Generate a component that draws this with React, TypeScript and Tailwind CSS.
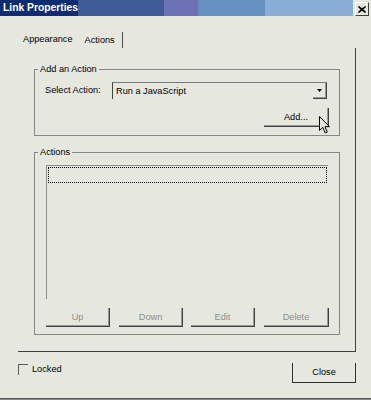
import React from "react";

function Btn({ label, w, disabled, extra = "" }: { label: string; w: string; disabled?: boolean; extra?: string }) {
  return (
    <div
      className={`${w} h-[19px] flex items-center justify-center border-r border-b border-[#404040] shadow-[inset_-1px_-1px_0_#9a9a9a] ${disabled ? "text-[#8e8e8e]" : "text-black"} ${extra}`}
    >
      {label}
    </div>
  );
}

export default function App() {
  return (
    <div className="relative w-[371px] h-[400px] bg-[#e6e7df] flex flex-col overflow-hidden text-black font-['Liberation_Sans',Arial,sans-serif] text-[9.2px] leading-[11px]">
      {/* Title bar */}
      <div className="flex h-[16px] shrink-0">
        <div className="w-[78px] bg-[#0e2c72] text-white font-bold text-[10.3px] leading-[16px] pl-[3px] whitespace-nowrap">
          Link Properties
        </div>
        <div className="w-[86px] bg-[#405c98]" />
        <div className="w-[34px] bg-[#6f71b7]" />
        <div className="w-[67px] bg-[#6690bf]" />
        <div className="w-[88px] bg-[#8aadd8]" />
        <div className="flex-1 flex items-start pt-[2px] pl-[2px]">
          <div className="w-[14px] h-[14px] bg-[#e6e7df] border-t border-l border-white border-r border-b border-r-[#404040] border-b-[#404040] flex items-center justify-center">
            <svg width="8" height="7" viewBox="0 0 8 7">
              <path d="M0.5 0.5 L7.5 6.5 M7.5 0.5 L0.5 6.5" stroke="#000" strokeWidth="1.6" />
            </svg>
          </div>
        </div>
      </div>

      {/* Tabs */}
      <div className="flex items-end h-[16px] mt-[16px] pl-[23px] shrink-0">
        <div className="pb-[3px]">Appearance</div>
        <div className="ml-[12px] h-[16px] pr-[7px] border-r border-[#505050] pt-[3px]">Actions</div>
      </div>

      {/* Tab panel */}
      <div className="ml-[18px] w-[338px] h-[304px] shrink-0 border-r border-b border-[#404040] pl-[16px] pt-[21px]">
        {/* Group: Add an Action */}
        <div className="w-[306px] h-[67px] border border-[#878787] flex flex-col">
          <div className="-mt-[6px] ml-[3px] px-[2px] w-fit bg-[#e6e7df]">Add an Action</div>
          <div className="flex items-center mt-[7px] pl-[10px]">
            <div className="w-[67px]">Select Action:</div>
            <div className="w-[215px] h-[17px] flex border-t border-l border-t-[#777] border-l-[#444]">
              <div className="flex-1 pl-[3px] flex items-center">Run a JavaScript</div>
              <div className="w-[14px] h-[16px] border-r border-b border-[#404040] shadow-[inset_-1px_-1px_0_#9a9a9a] flex items-center justify-center">
                <svg width="5" height="3" viewBox="0 0 5 3">
                  <path d="M0 0 H5 L2.5 3 Z" fill="#000" />
                </svg>
              </div>
            </div>
          </div>
          <div className="flex justify-end pr-[10px] mt-[9px]">
            <Btn label="Add..." w="w-[65px]" />
          </div>
        </div>

        {/* Group: Actions */}
        <div className="w-[306px] h-[183px] mt-[16px] border border-[#878787] flex flex-col">
          <div className="-mt-[6px] ml-[3px] px-[2px] w-fit bg-[#e6e7df]">Actions</div>
          <div className="ml-[11px] mt-[7px] w-[282px] h-[134px] border-t border-l border-[#8f8f8f] pt-[1px] pl-[1px]">
            <div className="w-[279px] h-[16px] border border-dotted border-black" />
          </div>
          <div className="flex ml-[11px] mt-[9px]">
            <Btn label="Up" w="w-[64px]" disabled />
            <Btn label="Down" w="w-[64px]" disabled extra="ml-[9px]" />
            <Btn label="Edit" w="w-[64px]" disabled extra="ml-[8px]" />
            <Btn label="Delete" w="w-[65px]" disabled extra="ml-[9px]" />
          </div>
        </div>
      </div>

      {/* Bottom row */}
      <div className="flex items-start mt-[11px] pl-[18px] shrink-0">
        <div className="flex items-center mt-[1px]">
          <div className="w-[10px] h-[11px] border-t border-l border-[#5a5a5a]" />
          <div className="ml-[4px]">Locked</div>
        </div>
        <div className="ml-auto mr-[15px] w-[64px] h-[20px] border-l border-r border-b border-[#303030] flex items-center justify-center">
          Close
        </div>
      </div>

      <div className="mt-auto h-[2px] border-t border-[#5a5a5a] bg-[#8a8a8a] shrink-0" />

      {/* Mouse cursor */}
      <svg className="absolute left-[319px] top-[116px]" width="12" height="18" viewBox="0 0 12 18">
        <path
          d="M0.5 0.5 L0.5 14.5 L3.8 11.4 L6.2 17 L8.3 16.1 L6 10.7 L10.5 10.7 Z"
          fill="#e6e7df"
          stroke="#000"
          strokeWidth="1"
          strokeLinejoin="miter"
        />
      </svg>
    </div>
  );
}
